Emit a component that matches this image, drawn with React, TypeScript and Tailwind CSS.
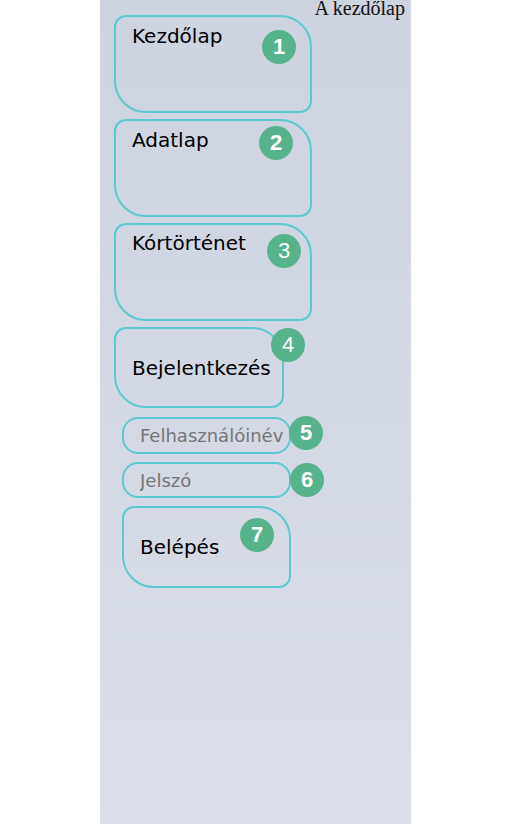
import React from 'react'

const sans = { fontFamily: '"DejaVu Sans", Verdana, sans-serif' }
const badgeFont = { fontFamily: '"Liberation Sans", Arial, sans-serif' }

const card =
  'border-2 border-[#5cc8d0] rounded-tl-[12px] rounded-tr-[32px] rounded-bl-[32px] rounded-br-[12px] px-[16px] text-[20px]'
const field =
  'block w-[169px] border-2 border-[#5cc8d0] rounded-[16px] bg-transparent pl-[16px] pr-[4px] text-[18px] placeholder:text-[#757575] outline-none'

function Badge({ n, className, bold = true }: { n: number; className: string; bold?: boolean }) {
  return (
    <span
      style={badgeFont}
      className={`absolute w-[34px] h-[34px] rounded-full bg-[#57b38b] text-white text-[22px] leading-[34px] text-center ${
        bold ? 'font-bold' : 'font-normal'
      } ${className}`}
    >
      {n}
    </span>
  )
}

export default function App() {
  return (
    <div className="w-full min-h-[824px] bg-white">
      <div
        style={sans}
        className="ml-[100px] w-[311px] min-h-[824px] bg-gradient-to-b from-[#cdd3df] to-[#d9dee8] text-black"
      >
        <div
          style={{ fontFamily: '"Liberation Serif", "Times New Roman", serif' }}
          className="h-[15px] leading-[16px] text-[20px] text-right pr-[6px] text-[#111]"
        >
          A kezdőlap
        </div>

        {/* menu */}
        <div className="flex flex-col items-start gap-[6px] pl-[14px]">
          <div className="relative">
            <div className={`w-[198px] h-[98px] pt-[4px] ${card}`}>Kezdőlap</div>
            <Badge n={1} className="left-[148px] top-[15px]" />
          </div>

          <div className="relative">
            <div className={`w-[198px] h-[98px] pt-[4px] ${card}`}>Adatlap</div>
            <Badge n={2} className="left-[145px] top-[7px]" />
          </div>

          <div className="relative">
            <div className={`w-[198px] h-[98px] pt-[3px] ${card}`}>Kórtörténet</div>
            <Badge n={3} bold={false} className="left-[153px] top-[11px]" />
          </div>

          <div className="relative">
            <div className={`w-[170px] h-[81px] flex items-center ${card}`}>Bejelentkezés</div>
            <Badge n={4} bold={false} className="left-[157px] top-[1px]" />
          </div>
        </div>

        {/* login form */}
        <div className="flex flex-col items-start gap-[8px] mt-[9px] pl-[22px]">
          <div className="relative">
            <input style={sans} placeholder="Felhasználóinév" className={`h-[37px] ${field}`} />
            <Badge n={5} className="left-[167px] top-[-1px]" />
          </div>

          <div className="relative">
            <input style={sans} type="password" placeholder="Jelszó" className={`h-[36px] ${field}`} />
            <Badge n={6} className="left-[168px] top-[1px]" />
          </div>

          <div className="relative">
            <button style={sans} className={`w-[169px] h-[82px] flex items-center text-left ${card}`}>
              Belépés
            </button>
            <Badge n={7} className="left-[118px] top-[12px]" />
          </div>
        </div>
      </div>
    </div>
  )
}
